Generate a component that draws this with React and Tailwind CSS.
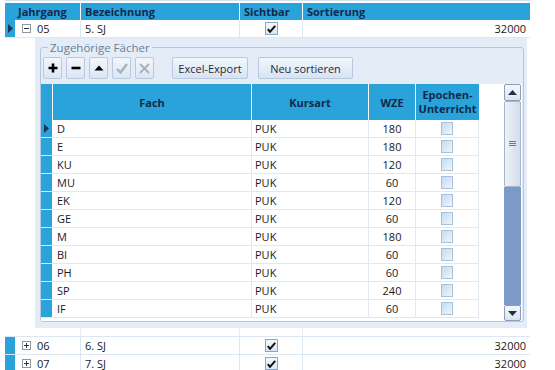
import React from "react";

const BLUE = "bg-[#29a3d9]";

function Tri() {
  return (
    <svg width="5" height="9" viewBox="0 0 5 9">
      <path d="M0 0L5 4.5L0 9Z" fill="#1b3556" />
    </svg>
  );
}

function CheckedBox() {
  return (
    <div className="w-[13px] h-[13px] border border-[#8fa6c0] bg-gradient-to-b from-[#f4f8fc] to-[#d9e6f3] flex items-center justify-center">
      <svg width="9" height="8" viewBox="0 0 9 8">
        <path d="M0.8 4.2L3 6.8L8.2 0.8" stroke="#111" strokeWidth="2" fill="none" />
      </svg>
    </div>
  );
}

function EmptyBox() {
  return (
    <div className="w-[12px] h-[13px] border border-[#a9c1da] bg-gradient-to-br from-[#c4dcf1] to-[#eef5fc]" />
  );
}

function PM({ plus }) {
  return (
    <div className="w-[9px] h-[9px] border border-[#8c97a6] bg-white flex items-center justify-center">
      <svg width="7" height="7" viewBox="0 0 7 7">
        <path d="M1 3.5H6" stroke="#333" strokeWidth="1" />
        {plus && <path d="M3.5 1V6" stroke="#333" strokeWidth="1" />}
      </svg>
    </div>
  );
}

function OuterRow({ active, open, jg, bez }) {
  return (
    <div className="flex h-[18px] border-b border-[#dbe7f2]">
      <div className={`w-[10px] ${BLUE} flex items-center justify-center`}>{active && <Tri />}</div>
      <div className="w-[66px] border-r border-[#dbe7f2] flex items-center pl-[7px] gap-[6px]">
        <PM plus={!open} />
        <span>{jg}</span>
      </div>
      <div className="w-[159px] border-r border-[#dbe7f2] flex items-center pl-[4px]">{bez}</div>
      <div className="w-[63px] border-r border-[#dbe7f2] flex items-center justify-center">
        <CheckedBox />
      </div>
      <div className="flex-1 flex items-center justify-end pr-[4px]">32000</div>
    </div>
  );
}

function ToolBtn({ children }) {
  return (
    <div className="w-[19px] h-[22px] border border-[#b9c9dd] rounded-[2px] bg-gradient-to-b from-[#f3f7fc] to-[#dbe6f3] flex items-center justify-center">
      {children}
    </div>
  );
}

function TextBtn({ children, w }) {
  return (
    <div
      className={`${w} h-[22px] border border-[#b9c9dd] rounded-[2px] bg-gradient-to-b from-[#f3f7fc] to-[#d8e3f1] flex items-center justify-center text-[#1f2a3a]`}
    >
      {children}
    </div>
  );
}

const rows = [
  ["D", "180"],
  ["E", "180"],
  ["KU", "120"],
  ["MU", "60"],
  ["EK", "120"],
  ["GE", "60"],
  ["M", "180"],
  ["BI", "60"],
  ["PH", "60"],
  ["SP", "240"],
  ["IF", "60"],
];

export default function App() {
  return (
    <div className="w-[555px] h-[370px] overflow-hidden bg-white font-['Open_Sans',sans-serif] text-[11px] text-[#1a1a1a] leading-none">
      <div className="ml-[5px] w-[525px] border-t border-[#cfe2f1] pt-[2px]">
        {/* header */}
        <div className={`flex h-[17px] ${BLUE} font-bold text-[#13294b] text-[11px]`}>
          <div className="w-[10px]" />
          <div className="w-[66px] border-r border-white flex items-center pl-[3px]">Jahrgang</div>
          <div className="w-[159px] border-r border-white flex items-center pl-[4px]">Bezeichnung</div>
          <div className="w-[63px] border-r border-white flex items-center pl-[4px]">Sichtbar</div>
          <div className="flex-1 flex items-center pl-[4px]">Sortierung</div>
        </div>

        <OuterRow active open jg="05" bez="5. SJ" />

        {/* detail */}
        <div className="flex flex-col">
          <div className="flex">
            <div className="w-[30px]" />
            <div className="w-[492px] bg-[#e3ecf7] pt-[3px] pl-[5px] pb-[6px]">
              <fieldset className="w-[484px] border border-[#b4c7de] rounded-[3px]">
                <legend className="ml-[7px] px-[2px] text-[#6d7d93] text-[11.5px] leading-[13px]">
                  Zugehörige Fächer
                </legend>
                <div className="flex items-center mt-[3px] ml-[2px] gap-[4px]">
                  <ToolBtn>
                    <svg width="10" height="10" viewBox="0 0 10 10">
                      <path d="M5 0.5V9.5M0.5 5H9.5" stroke="#000" strokeWidth="2.6" />
                    </svg>
                  </ToolBtn>
                  <ToolBtn>
                    <svg width="10" height="10" viewBox="0 0 10 10">
                      <path d="M0.5 5H9.5" stroke="#000" strokeWidth="2.6" />
                    </svg>
                  </ToolBtn>
                  <ToolBtn>
                    <svg width="10" height="6" viewBox="0 0 10 6">
                      <path d="M0.5 5.5L5 0.5L9.5 5.5Z" fill="#000" />
                    </svg>
                  </ToolBtn>
                  <ToolBtn>
                    <svg width="12" height="11" viewBox="0 0 12 11">
                      <path d="M1 6L4.5 9.5L11 1" stroke="#a9b0ba" strokeWidth="2.4" fill="none" />
                    </svg>
                  </ToolBtn>
                  <ToolBtn>
                    <svg width="11" height="11" viewBox="0 0 11 11">
                      <path d="M1 1L10 10M10 1L1 10" stroke="#a9b0ba" strokeWidth="1.8" />
                    </svg>
                  </ToolBtn>
                  <div className="w-[10px]" />
                  <TextBtn w="w-[76px]">Excel-Export</TextBtn>
                  <div className="w-[2px]" />
                  <TextBtn w="w-[95px]">Neu sortieren</TextBtn>
                </div>

                {/* inner grid */}
                <div className="flex mt-[5px] h-[237px] w-[481px] bg-white">
                  <div className="w-[438px] flex flex-col">
                    <div className={`flex h-[36px] ${BLUE} font-bold text-[#13294b] text-[11px]`}>
                      <div className="w-[12px] border-r border-white" />
                      <div className="w-[199px] border-r border-white flex items-center justify-center">Fach</div>
                      <div className="w-[117px] border-r border-white flex items-center justify-center">Kursart</div>
                      <div className="w-[47px] border-r border-white flex items-center justify-center">WZE</div>
                      <div className="w-[63px] flex flex-col items-center justify-center leading-[14px] text-center">
                        <span>Epochen-</span>
                        <span>Unterricht</span>
                      </div>
                    </div>
                    {rows.map(([f, w], i) => (
                      <div key={f} className="flex h-[18px] border-b border-[#e0e8f1]">
                        <div className={`w-[12px] ${BLUE} border-r border-white flex items-center justify-center`}>
                          {i === 0 && <Tri />}
                        </div>
                        <div className="w-[199px] border-r border-[#e0e8f1] flex items-center pl-[4px]">{f}</div>
                        <div className="w-[117px] border-r border-[#e0e8f1] flex items-center pl-[3px]">PUK</div>
                        <div className="w-[47px] border-r border-[#e0e8f1] flex items-center justify-center">{w}</div>
                        <div className="w-[63px] border-r border-[#e0e8f1] flex items-center justify-center">
                          <EmptyBox />
                        </div>
                      </div>
                    ))}
                  </div>
                  <div className="w-[25px]" />
                  {/* scrollbar */}
                  <div className="w-[17px] flex flex-col">
                    <div className="h-[17px] border border-[#8b9db8] rounded-[2px] bg-gradient-to-b from-[#f5f8fc] to-[#dbe4ef] flex items-center justify-center">
                      <svg width="9" height="5" viewBox="0 0 9 5">
                        <path d="M0 5L4.5 0L9 5Z" fill="#1f2f4a" />
                      </svg>
                    </div>
                    <div className="h-[86px] border border-[#a4b4cb] rounded-[2px] bg-gradient-to-r from-[#eef2f8] to-[#d3dcea] flex items-center justify-center">
                      <svg width="7" height="6" viewBox="0 0 7 6">
                        <path d="M0 0.5H7M0 2.5H7M0 4.5H7" stroke="#6a7a92" strokeWidth="1" />
                      </svg>
                    </div>
                    <div className="flex-1 bg-[#7c9ac8]" />
                    <div className="h-[16px] border border-[#8b9db8] rounded-[2px] bg-gradient-to-b from-[#f5f8fc] to-[#dbe4ef] flex items-center justify-center">
                      <svg width="9" height="5" viewBox="0 0 9 5">
                        <path d="M0 0L4.5 5L9 0Z" fill="#1f2f4a" />
                      </svg>
                    </div>
                  </div>
                </div>
              </fieldset>
            </div>
          </div>
          <div className="flex h-[9px] border-b border-[#dbe7f2]">
            <div className="w-[10px]" />
            <div className="w-[66px] border-r border-[#e6eef6]" />
            <div className="w-[159px] border-r border-[#e6eef6]" />
            <div className="w-[63px] border-r border-[#e6eef6]" />
            <div className="flex-1" />
          </div>
        </div>

        <OuterRow jg="06" bez="6. SJ" />
        <OuterRow jg="07" bez="7. SJ" />
      </div>
    </div>
  );
}
